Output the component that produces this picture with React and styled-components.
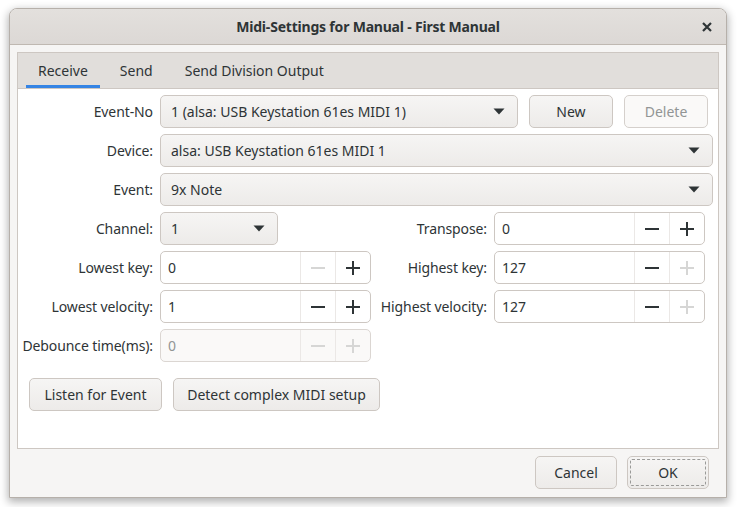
import React from 'react';
import styled, { createGlobalStyle } from 'styled-components';

const Global = createGlobalStyle`
  html, body { margin: 0; padding: 0; background: #ffffff; }
  body { font-family: "Noto Sans", "DejaVu Sans", sans-serif; font-size: 14px; color: #2e3436; }
  * { box-sizing: border-box; }
`;

const Arrow = () => (
  <svg width="12" height="7" viewBox="0 0 12 7"><path d="M0.5 0.5 L11.5 0.5 L6 6.5 Z" fill="#2e3436" /></svg>
);

const Minus = ({ off }) => (
  <svg width="16" height="16" viewBox="0 0 16 16"><path d="M1 8 H15" stroke={off ? '#d6d6d5' : '#2e3436'} strokeWidth="2" /></svg>
);

const Plus = ({ off }) => (
  <svg width="16" height="16" viewBox="0 0 16 16"><path d="M1 8 H15 M8 1 V15" stroke={off ? '#d6d6d5' : '#2e3436'} strokeWidth="2" /></svg>
);

const Close = () => (
  <svg width="12" height="12" viewBox="0 0 12 12"><path d="M2 2 L10 10 M10 2 L2 10" stroke="#2e3436" strokeWidth="2.2" /></svg>
);

export default function App() {
  return (
    <>
      <Global />
      <Page>
        <Window>
          <TitleBar>
            <Title>Midi-Settings for Manual - First Manual</Title>
            <CloseBtn><Close /></CloseBtn>
          </TitleBar>
          <Body>
            <Notebook>
              <Tabs>
                <Tab active>Receive</Tab>
                <Tab>Send</Tab>
                <Tab>Send Division Output</Tab>
              </Tabs>
              <TabPage>
                <Row>
                  <Label>Event-No</Label>
                  <Combo w="358px">1 (alsa: USB Keystation 61es MIDI 1)<Arrow /></Combo>
                  <Button w="84px">New</Button>
                  <Button w="84px" disabled>Delete</Button>
                </Row>
                <Row>
                  <Label>Device:</Label>
                  <Combo>alsa: USB Keystation 61es MIDI 1<Arrow /></Combo>
                </Row>
                <Row>
                  <Label>Event:</Label>
                  <Combo>9x Note<Arrow /></Combo>
                </Row>
                <Fields>
                  <Label>Channel:</Label>
                  <Combo w="118px">1<Arrow /></Combo>
                  <Label>Transpose:</Label>
                  <Spin value="0" />

                  <Label>Lowest key:</Label>
                  <Spin value="0" minusOff />
                  <Label>Highest key:</Label>
                  <Spin value="127" plusOff />

                  <Label>Lowest velocity:</Label>
                  <Spin value="1" />
                  <Label>Highest velocity:</Label>
                  <Spin value="127" plusOff />

                  <Label>Debounce time(ms):</Label>
                  <Spin value="0" disabled />
                </Fields>
                <Actions>
                  <Button w="133px">Listen for Event</Button>
                  <Button w="207px">Detect complex MIDI setup</Button>
                </Actions>
              </TabPage>
            </Notebook>
            <Footer>
              <Button w="82px">Cancel</Button>
              <Button w="82px" focused>OK</Button>
            </Footer>
          </Body>
        </Window>
      </Page>
    </>
  );
}

const Spin = ({ value, disabled, minusOff, plusOff }) => (
  <SpinBox disabled={disabled}>
    <SpinText disabled={disabled}>{value}</SpinText>
    <SpinBtn><Minus off={disabled || minusOff} /></SpinBtn>
    <SpinBtn><Plus off={disabled || plusOff} /></SpinBtn>
  </SpinBox>
);

const Page = styled.div`
  width: 737px;
  height: 507px;
  padding: 8px 10px 0 9px;
  overflow: hidden;
`;

const Window = styled.div`
  width: 718px;
  height: 490px;
  border: 1px solid #b6b0aa;
  border-radius: 8px 8px 0 0;
  background: #f6f5f4;
  box-shadow: 0 3px 9px 1px rgba(0, 0, 0, 0.3);
  display: flex;
  flex-direction: column;
  overflow: hidden;
`;

const TitleBar = styled.div`
  height: 36px;
  flex: none;
  background: linear-gradient(#e3e0dd, #dcd8d5);
  border-bottom: 1px solid #bfb8b1;
  display: flex;
  align-items: center;
  justify-content: center;
  position: relative;
`;

const Title = styled.div`
  font-weight: bold;
  font-size: 14px;
  letter-spacing: -0.2px;
  color: #2e3436;
`;

const CloseBtn = styled.div`
  position: absolute;
  right: 13px;
  top: 12px;
  display: flex;
`;

const Body = styled.div`
  flex: 1;
  display: flex;
  flex-direction: column;
  padding: 7px 7px 0 7px;
`;

const Notebook = styled.div`
  border: 1px solid #cdc7c2;
  height: 397px;
  display: flex;
  flex-direction: column;
`;

const Tabs = styled.div`
  height: 36px;
  background: #e1dedb;
  border-bottom: 1px solid #cdc7c2;
  display: flex;
  padding-left: 4px;
`;

const Tab = styled.div`
  margin: 0 4px;
  padding: 0 12px;
  display: flex;
  align-items: center;
  color: #2e3436;
  box-shadow: ${p => (p.active ? 'inset 0 -3px #3584e4' : 'none')};
`;

const TabPage = styled.div`
  flex: 1;
  background: #ffffff;
  padding: 6px 5px 0 0;
`;

const Row = styled.div`
  display: flex;
  align-items: center;
  gap: 11px;
  margin-bottom: 6px;
  & > :first-child { margin-right: -5px; }
`;

const Label = styled.div`
  width: 136px;
  text-align: right;
  white-space: nowrap;
  padding-right: 1px;
  letter-spacing: -0.1px;
`;

const Combo = styled.div`
  ${p => (p.w ? `width: ${p.w};` : 'flex: 1;')}
  height: 33px;
  border: 1px solid #cdc7c2;
  border-radius: 5px;
  background: linear-gradient(#f6f5f4, #edebe9);
  display: flex;
  align-items: center;
  justify-content: space-between;
  padding: 0 12px 0 10px;
  white-space: nowrap;
`;

const Button = styled.div`
  width: ${p => p.w};
  height: 33px;
  border: 1px solid ${p => (p.disabled ? '#d5d0cc' : '#cdc7c2')};
  border-radius: 5px;
  background: ${p => (p.disabled ? '#faf9f8' : 'linear-gradient(#f6f5f4, #edebe9)')};
  color: ${p => (p.disabled ? '#929595' : '#2e3436')};
  display: flex;
  align-items: center;
  justify-content: center;
  white-space: nowrap;
  outline: ${p => (p.focused ? '1px dashed #9a9a98' : 'none')};
  outline-offset: -4px;
`;

const Fields = styled.div`
  display: grid;
  grid-template-columns: 136px 211px 111px 211px;
  column-gap: 6px;
  row-gap: 6px;
  align-items: center;
  justify-items: start;
  & > ${Label} { width: auto; justify-self: stretch; }
`;

const SpinBox = styled.div`
  width: 211px;
  height: 33px;
  border: 1px solid ${p => (p.disabled ? '#dbd6d2' : '#cdc7c2')};
  border-radius: 5px;
  background: ${p => (p.disabled ? '#faf9f8' : '#ffffff')};
  display: flex;
  overflow: hidden;
`;

const SpinText = styled.div`
  flex: 1;
  display: flex;
  align-items: center;
  padding-left: 7px;
  color: ${p => (p.disabled ? '#929595' : '#2e3436')};
`;

const SpinBtn = styled.div`
  width: 35px;
  border-left: 1px solid #ebe8e6;
  display: flex;
  align-items: center;
  justify-content: center;
`;

const Actions = styled.div`
  display: flex;
  gap: 11px;
  margin: 16px 0 0 11px;
`;

const Footer = styled.div`
  display: flex;
  justify-content: flex-end;
  gap: 10px;
  padding: 7px 10px 0 0;
`;
